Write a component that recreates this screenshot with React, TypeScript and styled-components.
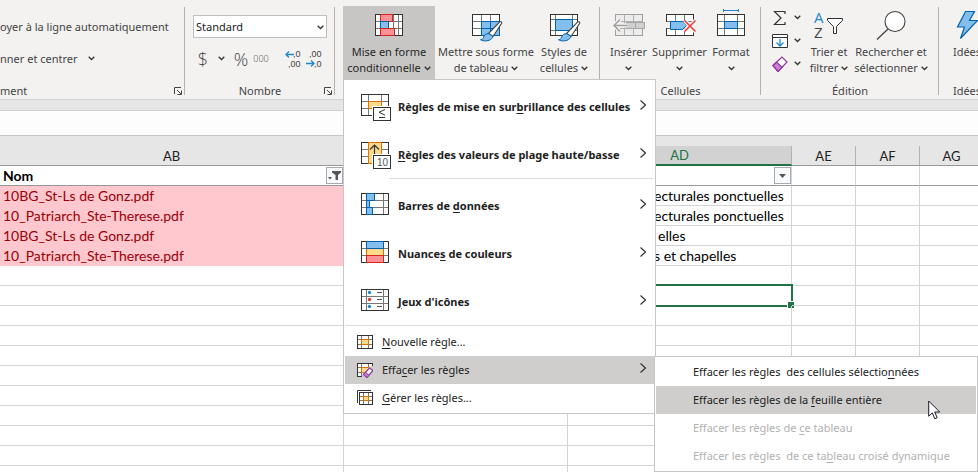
import React from 'react';
import styled, { createGlobalStyle, css } from 'styled-components';

const INK = '#444444';
const GREEN = '#217346';
const UI = '"Noto Sans", "Open Sans", sans-serif';
const SHEET = 'Lato, "Open Sans", sans-serif';

const GlobalStyle = createGlobalStyle`
  * { box-sizing: border-box; }
  html, body, #root { height: 100%; }
  body { margin: 0; overflow: hidden; background: #fff; font-family: ${UI}; font-size: 11px; color: ${INK}; }
  button, select { font: inherit; color: inherit; }
  button { border: 0; background: none; padding: 0; margin: 0; }
`;

const Window = styled.div`
  display: flex;
  flex-direction: column;
  height: 100%;
  overflow: hidden;
`;

const Ribbon = styled.header`
  display: flex;
  flex: none;
  height: 100px;
  padding-top: 6px;
  background: #f3f2f1;
  border-bottom: 1px solid #d2d0ce;
`;

const Group = styled.section<{ $w: number; $pad?: number }>`
  position: relative;
  display: flex;
  flex: 0 0 ${p => p.$w}px;
  min-width: 0;
  flex-direction: column;
  padding: 0 ${p => p.$pad ?? 0}px;
  &::after {
    content: '';
    position: absolute;
    top: 1px;
    right: 0;
    bottom: 4px;
    width: 1px;
    background: #b3b0ad;
  }
`;

const GroupBody = styled.div<{ $column?: boolean; $top?: number }>`
  display: flex;
  flex: none;
  height: 74px;
  padding-top: ${p => p.$top ?? 0}px;
  flex-direction: ${p => (p.$column ? 'column' : 'row')};
`;

const GroupFooter = styled.footer<{ $left?: boolean }>`
  display: flex;
  align-items: center;
  justify-content: ${p => (p.$left ? 'flex-start' : 'center')};
  height: 19px;
  padding-top: 2px;
  line-height: 16px;
  white-space: nowrap;
`;

const Launcher = styled.button`
  position: absolute;
  right: 3px;
  bottom: 4px;
  display: flex;
`;

const TextButton = styled.button`
  display: flex;
  align-items: center;
  gap: 10px;
  height: 32px;
  white-space: nowrap;
`;

const BigButton = styled.button<{ $w: number; $active?: boolean }>`
  display: flex;
  flex: 0 0 ${p => p.$w}px;
  flex-direction: column;
  align-items: center;
  height: 74px;
  padding-top: 4px;
  line-height: 16px;
  white-space: nowrap;
  background: ${p => (p.$active ? '#c8c6c4' : 'transparent')};
  color: ${p => (p.$active ? '#262626' : INK)};
  svg.icon { flex: none; margin-bottom: 2px; overflow: visible; }
`;

const LabelLine = styled.span`
  display: flex;
  align-items: center;
  justify-content: center;
  gap: 3px;
  min-height: 16px;
`;

const MenuAnchor = styled.div`
  position: relative;
  display: flex;
`;

const MiniColumn = styled.div`
  display: flex;
  flex: 0 0 37px;
  flex-direction: column;
  padding-left: 3px;
`;

const MiniButton = styled.button`
  display: flex;
  align-items: center;
  gap: 6px;
  height: 23px;
`;

const SelectBox = styled.label`
  position: relative;
  display: flex;
  margin-top: 9px;
  svg { position: absolute; right: 3px; top: 10px; pointer-events: none; }
`;

const Select = styled.select`
  appearance: none;
  width: 100%;
  height: 23px;
  padding: 0 2px;
  border: 1px solid #c1bfbd;
  border-radius: 0;
  background: #fff;
  color: #222;
`;

const NumberRow = styled.div`
  display: flex;
  align-items: center;
  height: 41px;
  padding-left: 4px;
`;

const NumButton = styled.button<{ $w: number; $size?: number }>`
  display: flex;
  align-items: center;
  justify-content: center;
  flex: 0 0 ${p => p.$w}px;
  height: 24px;
  font-family: "Open Sans", sans-serif;
  font-weight: 300;
  font-size: ${p => p.$size ?? 18}px;
`;

const Divider = styled.span`
  width: 1px;
  height: 21px;
  margin: 0 6px;
  background: #d2d0ce;
`;

const Strip = styled.div`
  flex: none;
  height: 11px;
  background: #e6e6e6;
  border-bottom: 1px solid #d0d0d0;
`;

const FormulaBar = styled.div`
  flex: none;
  height: 25px;
  background: #fdfdfd;
  border-bottom: 1px solid #c6c6c6;
`;

const HeaderStrip = styled.div`
  flex: none;
  height: 10px;
  background: #e6e6e6;
`;

const SheetArea = styled.main`
  flex: 1;
  min-height: 0;
  overflow: hidden;
`;

const Sheet = styled.table`
  width: 984px;
  table-layout: fixed;
  border-collapse: separate;
  border-spacing: 0;
  font-family: ${SHEET};
  font-size: 14px;
  color: #000;
`;

const Col = styled.col<{ $w: number }>`
  width: ${p => p.$w}px;
`;

const ColHead = styled.th<{ $selected?: boolean }>`
  height: 20px;
  padding: 0;
  background: #e6e6e6;
  border-right: 1px solid #b1b1b1;
  border-bottom: 1px solid #999;
  font-size: 13px;
  font-weight: 400;
  line-height: 18px;
  color: #222;
  ${p => p.$selected && css`
    background: #d2d2d2;
    color: ${GREEN};
    border-bottom: 2px solid ${GREEN};
    line-height: 17px;
  `}
`;

const Cell = styled.td<{ $head?: boolean; $bad?: boolean; $indent?: number }>`
  position: relative;
  height: 20px;
  padding: 0 0 0 ${p => p.$indent ?? 3}px;
  border-right: 1px solid #d4d4d4;
  border-bottom: 1px solid ${p => (p.$head ? '#999' : '#d4d4d4')};
  font-weight: ${p => (p.$head ? 700 : 400)};
  line-height: 19px;
  white-space: nowrap;
  ${p => p.$bad && css`
    background: #ffc7ce;
    color: #9c0006;
    border-bottom-color: #ffc7ce;
  `}
`;

const FilterButton = styled.button`
  position: absolute;
  top: 1px;
  right: 0;
  display: flex;
  align-items: center;
  justify-content: center;
  width: 17px;
  height: 17px;
  border: 1px solid #a6abb3;
  background: #f9fafc;
`;

const Selection = styled.span`
  position: absolute;
  inset: -2px;
  border: 2px solid ${GREEN};
  &::after {
    content: '';
    position: absolute;
    right: -3px;
    bottom: -3px;
    width: 6px;
    height: 6px;
    background: ${GREEN};
    border: solid #fff;
    border-width: 1px 0 0 1px;
  }
`;

const Menu = styled.div`
  position: absolute;
  top: 73px;
  left: 0;
  z-index: 5;
  width: 313px;
  padding: 2px 1px 1px;
  border: 1px solid #c6c6c6;
  background: #fff;
  color: #222;
`;

const BigItem = styled.button`
  display: flex;
  align-items: center;
  width: 100%;
  height: 48px;
  padding: 2px 7px 0 15px;
  font-weight: 700;
  white-space: nowrap;
  svg.icon { flex: none; margin-right: 6px; }
`;

const ItemText = styled.span`
  flex: 1;
  padding-bottom: 2px;
  text-align: left;
  white-space: pre;
  u { text-underline-offset: 2px; }
`;

const ArrowIcon = styled.svg`
  flex: none;
  margin-bottom: 4px;
`;

const Rule = styled.hr<{ $inset?: number }>`
  height: 1px;
  margin: 0 0 2px ${p => p.$inset ?? 0}px;
  border: 0;
  background: #dcdcdc;
`;

const SmallItem = styled.button<{ $active?: boolean }>`
  display: flex;
  align-items: center;
  width: 100%;
  height: 28px;
  padding: 0 7px 0 12px;
  background: ${p => (p.$active ? '#d0cecc' : 'transparent')};
  svg.icon { flex: none; margin-right: 9px; }
`;

const SubAnchor = styled.div`
  position: relative;
`;

const SubMenu = styled(Menu)`
  top: 0;
  left: 309px;
  width: 324px;
  padding-top: 1px;
`;

const SubItem = styled.button<{ $active?: boolean }>`
  display: flex;
  align-items: center;
  width: 100%;
  height: 28px;
  padding-left: 37px;
  background: ${p => (p.$active ? '#d0cecc' : 'transparent')};
  &:disabled { color: #b1b1b1; }
`;

const Pointer = styled.svg`
  position: absolute;
  left: 273px;
  top: 43px;
`;

const Chevron = () => (
  <svg width="7" height="5" viewBox="0 0 7 5" fill="none" stroke="#333" strokeWidth="1.3"><path d="M0.7 0.8 3.5 3.5 6.3 0.8" /></svg>
);

const Arrow = () => (
  <ArrowIcon width="8" height="12" viewBox="0 0 8 12" fill="none" stroke="#333" strokeWidth="1.2"><path d="M1.5 1.5 6.5 6 1.5 10.5" /></ArrowIcon>
);

const LauncherIcon = () => (
  <svg width="8" height="8" viewBox="0 0 8 8" fill="none" stroke="#444"><path d="M.5 7V.5H7M3 3l4 4M7.5 3.5v4h-4" /></svg>
);

type GridProps = { x?: number; y?: number; w?: number; h?: number; v: number[]; r: number[]; stroke?: string; inner?: string; fill?: string };
const GridShape = ({ x = 2, y = 4, w = 28, h = 22, v, r, stroke = '#333', inner = '#777', fill = '#fff' }: GridProps) => (
  <g transform={`translate(${x} ${y})`} fill="none">
    <rect x=".5" y=".5" width={w - 1} height={h - 1} fill={fill} />
    {v.map(n => <path key={`v${n}`} d={`M${n + 0.5} 1V${h - 1}`} stroke={inner} />)}
    {r.map(n => <path key={`r${n}`} d={`M1 ${n + 0.5}H${w - 1}`} stroke={inner} />)}
    <rect x=".5" y=".5" width={w - 1} height={h - 1} stroke={stroke} />
  </g>
);

const Box = ({ x, y, w, h, c }: { x: number; y: number; w: number; h: number; c: 'red' | 'blue' | 'gold' }) => {
  const [fill, stroke] = { red: ['#ff9196', '#d6251f'], blue: ['#83beec', '#0063b1'], gold: ['#fbdb8b', '#e07000'] }[c];
  return <rect x={x + 0.5} y={y + 0.5} width={w - 1} height={h - 1} fill={fill} stroke={stroke} />;
};

const Icon = ({ children, w = 32, h = 32 }: { children: React.ReactNode; w?: number; h?: number }) => (
  <svg className="icon" width={w} height={h} viewBox={`0 0 ${w} ${h}`} fill="none">{children}</svg>
);

const Brush = () => (
  <g>
    <path d="M18.5 23.5 29.5 12.2c1-.9 2.6-.4 2.2 1L23 26.5z" fill="#fff" stroke="#444" strokeWidth="1.1" />
    <path d="M18.7 23.7c-3-.2-4.7 1.5-5.2 3.8-.4 1.5-1.5 2-3 2.2 2 1.3 5.5 1.7 8.5.6 2.4-1 3.7-2.3 3.8-4.2z" fill="#83beec" stroke="#0063b1" />
  </g>
);

const ConditionalIcon = () => (
  <Icon><GridShape v={[5, 13, 18, 23]} r={[7, 14]} /><Box x={7} y={4} w={13} h={8} c="red" /><Box x={7} y={11} w={9} h={8} c="blue" /><Box x={7} y={18} w={15} h={8} c="red" /></Icon>
);
const TableIcon = () => (
  <Icon><GridShape v={[9, 18]} r={[7, 14]} /><rect x="11.5" y="11.5" width="18" height="14" fill="#83beec" stroke="#0063b1" /><path d="M11.5 18.5h18M20.5 11.5v14" stroke="#0063b1" /><Brush /></Icon>
);
const StylesIcon = () => (
  <Icon><GridShape v={[5, 22]} r={[5, 16]} /><Box x={7} y={9} w={18} h={12} c="blue" /><Brush /></Icon>
);
const InsertIcon = () => (
  <Icon>
    <GridShape v={[9, 18]} r={[7, 14]} stroke="#a0a0a0" inner="#b0b0b0" fill="#ececec" />
    <rect x="13.5" y="12.5" width="18" height="6" fill="#d0d0d0" stroke="#a6a6a6" />
    <path d="M22.5 12.5v6" stroke="#a6a6a6" />
    <path d="M1 15.5h13M7 9.5 1 15.5l6 6" stroke="#f3f2f1" strokeWidth="4" />
    <path d="M1 15.5h13M7 9.5 1 15.5l6 6" stroke="#a0a0a0" strokeWidth="1.5" />
  </Icon>
);
const DeleteIcon = () => (
  <Icon>
    <GridShape v={[9, 18]} r={[7, 14]} />
    <path d="M1 12h5v6H1zM20 12h12v6H20z" fill="#f3f2f1" />
    <path d="M6.5 11.5h12l4 4-4 4h-12z" fill="#83beec" stroke="#0063b1" />
    <path d="M20.5 10.5l11 11M31.5 10.5l-11 11" stroke="#f3f2f1" strokeWidth="4" />
    <path d="M20.5 10.5l11 11M31.5 10.5l-11 11" stroke="#ee3a33" strokeWidth="1.5" />
  </Icon>
);
const FormatIcon = () => (
  <Icon><GridShape v={[7, 20]} r={[7, 14]} /><Box x={9} y={11} w={14} h={8} c="blue" /><path d="M8.5-1v3M23.5-1v3M9 .5h14" stroke="#1e87cf" /></Icon>
);
const SortIcon = () => (
  <Icon>
    <text x="1" y="13" fontFamily="Open Sans" fontSize="15" fill="#1e87cf">A</text>
    <text x="1" y="28" fontFamily="Open Sans" fontSize="15" fill="#444">Z</text>
    <path d="M14.5 8.5h15v2l-6 6v7h-3v-7l-6-6z" fill="#fff" stroke="#333" />
  </Icon>
);
const SearchIcon = () => (
  <Icon><circle cx="20" cy="11.5" r="10" fill="#fff" stroke="#444" strokeWidth="1.1" /><path d="M13 19 2 29.5" stroke="#444" strokeWidth="1.3" /></Icon>
);
const IdeasIcon = () => (
  <Icon><path d="M14.5 1.5h9l-5 9h8L9.5 28.5l4-11.5H6.5z" fill="#83beec" stroke="#0063b1" strokeWidth="1.2" /></Icon>
);

const HighlightRulesIcon = () => (
  <Icon w={32} h={28}>
    <GridShape x={1} y={1} v={[7, 20]} r={[7, 14]} /><Box x={8} y={8} w={14} h={8} c="gold" />
    <rect x="12" y="13" width="20" height="15" fill="#fff" /><rect x="13.5" y="14.5" width="17" height="13" fill="#fff" stroke="#333" />
    <path d="M25 16.5l-6 2.800 6 2.800M19 24.5h6" stroke="#333" />
  </Icon>
);
const TopRulesIcon = () => (
  <Icon w={32} h={28}>
    <GridShape x={1} y={1} v={[7, 20]} r={[7, 14]} /><Box x={8} y={1} w={14} h={22} c="gold" />
    <path d="M14.5 13V4M10 8.5 14.5 4 19 8.5" stroke="#333" strokeWidth="1.2" />
    <rect x="12" y="13" width="20" height="15" fill="#fff" /><rect x="13.5" y="14.5" width="17" height="13" fill="#fff" stroke="#333" />
    <text x="17" y="25" fontFamily="Liberation Sans" fontSize="10" fontWeight="400" fill="#555">10</text>
  </Icon>
);
const DataBarsIcon = () => (
  <Icon w={32} h={28}>
    <GridShape x={1} y={1} v={[5, 22]} r={[7, 14]} /><Box x={6} y={1} w={9} h={8} c="blue" /><Box x={6} y={8} w={4} h={8} c="blue" /><Box x={6} y={15} w={7} h={8} c="blue" />
  </Icon>
);
const ColorScalesIcon = () => (
  <Icon w={32} h={28}>
    <GridShape x={1} y={1} v={[]} r={[7, 14]} /><Box x={6} y={8} w={18} h={8} c="gold" /><Box x={6} y={1} w={18} h={8} c="blue" /><Box x={6} y={15} w={18} h={8} c="red" />
  </Icon>
);
const IconSetsIcon = () => (
  <Icon w={32} h={28}>
    <GridShape x={1} y={1} v={[5, 22]} r={[7, 14]} />
    {['#1e87cf', '#e8322b', '#1e87cf'].map((c, i) => (
      <g key={i}><circle cx="9.5" cy={4.5 + i * 7} r="1.7" fill={c} /><path d={`M17 ${4.5 + i * 7}h5`} stroke="#555" /></g>
    ))}
  </Icon>
);
const NewRuleIcon = () => (
  <Icon w={16} h={16}><GridShape x={0} y={1} w={16} h={14} v={[4, 11]} r={[4, 9]} /><Box x={4} y={5} w={8} h={6} c="gold" /></Icon>
);
const ClearRuleIcon = () => (
  <Icon w={16} h={16}>
    <GridShape x={0} y={1} w={16} h={14} v={[4, 11]} r={[4, 9]} /><Box x={4} y={5} w={8} h={6} c="gold" />
    <path d="M5 13 13 4h3v12H5z" fill="#d0cecc" />
    <path d="M6.5 12.5l6-6.5 3.5 2.5-6 7z" fill="#fff" stroke="#9334a0" strokeWidth="1.2" /><path d="M6.5 12.5l2-2.2 3.5 3-2 2.2z" fill="#c87fd2" stroke="#9334a0" />
  </Icon>
);
const ManageRulesIcon = () => (
  <Icon w={16} h={16}><path d="M.5 13V.5H14" stroke="#333" /><GridShape x={2} y={2} w={14} h={13} v={[4, 9]} r={[4, 8]} /><Box x={6} y={6} w={6} h={5} c="gold" /></Icon>
);

const SumIcon = () => (
  <svg width="16" height="16" viewBox="0 0 16 16" fill="none" stroke="#333" strokeWidth="1.2"><path d="M13 4V1.5H2.5L9 8l-6.5 6.5H13V12" /></svg>
);
const FillIcon = () => (
  <svg width="16" height="16" viewBox="0 0 16 16" fill="none"><path d="M.5 1.5h15v13H.5z" fill="#fff" stroke="#333" /><path d="M1 4.5h14" stroke="#333" /><path d="M8 6v7M4.5 9.5 8 13l3.5-3.5" stroke="#1e87cf" strokeWidth="1.3" /></svg>
);
const EraserIcon = () => (
  <svg width="16" height="16" viewBox="0 0 16 16"><path d="M1 9.5 10 1l5 5-9 9.5z" fill="#fff" stroke="#9334a0" strokeWidth="1.2" /><path d="M1 9.5 4.5 6l5.5 5.2L6 15.5z" fill="#c87fd2" stroke="#9334a0" strokeWidth="1.2" /></svg>
);
const DecimalIcon = ({ less }: { less?: boolean }) => (
  <svg width="18" height="18" viewBox="0 0 18 18" fill="#444" fontFamily="Liberation Sans" fontSize="9" fontWeight="400">
    {less ? <><text x="3" y="7">,00</text><text x="8" y="17">,0</text><path d="M0 13.5h8M5 10.5l3 3-3 3" fill="none" stroke="#1e87cf" strokeWidth="1.3" /></>
      : <><text x="8" y="7">,0</text><text x="3" y="17">,00</text><path d="M9 4.5H1M4 1.5l-3 3 3 3" fill="none" stroke="#1e87cf" strokeWidth="1.3" /></>}
  </svg>
);

const bigRules = [
  { icon: <HighlightRulesIcon />, text: <>Règles de mise en sur<u>b</u>rillance des cellules</> },
  { icon: <TopRulesIcon />, text: <><u>R</u>ègles des valeurs de plage haute/basse</>, end: true },
  { icon: <DataBarsIcon />, text: <>Barres de <u>d</u>onnées</> },
  { icon: <ColorScalesIcon />, text: <>Nuance<u>s</u> de couleurs</> },
  { icon: <IconSetsIcon />, text: <><u>J</u>eux d'icônes</> },
];

const RulesMenu = () => (
  <Menu role="menu">
    {bigRules.map((r, i) => (
      <React.Fragment key={i}>
        <BigItem role="menuitem">{r.icon}<ItemText>{r.text}</ItemText><Arrow /></BigItem>
        {r.end && <Rule $inset={44} />}
      </React.Fragment>
    ))}
    <Rule />
    <SmallItem role="menuitem"><NewRuleIcon /><ItemText><u>N</u>ouvelle règle...</ItemText></SmallItem>
    <SubAnchor>
      <SmallItem role="menuitem" $active><ClearRuleIcon /><ItemText>Effa<u>c</u>er les règles</ItemText><Arrow /></SmallItem>
      <SubMenu role="menu">
        <SubItem role="menuitem"><ItemText>Effacer les règles  des cellules sélectio<u>n</u>nées</ItemText></SubItem>
        <SubItem role="menuitem" $active><ItemText>Effacer les règles de la <u>f</u>euille entière</ItemText></SubItem>
        <SubItem role="menuitem" disabled><ItemText>Effacer les règles de <u>c</u>e tableau</ItemText></SubItem>
        <SubItem role="menuitem" disabled><ItemText>Effacer les règles  de ce ta<u>b</u>leau croisé dynamique</ItemText></SubItem>
        <Pointer width="13" height="20" viewBox="0 0 13 20"><path d="M.7 1v15.2l3.6-3.3 2.5 5.9 2.4-1-2.5-5.8h5z" fill="#fff" stroke="#1a1a2a" /></Pointer>
      </SubMenu>
    </SubAnchor>
    <SmallItem role="menuitem"><ManageRulesIcon /><ItemText><u>G</u>érer les règles...</ItemText></SmallItem>
  </Menu>
);

type BigProps = { w: number; icon: React.ReactNode; top: string; bottom?: string; active?: boolean; plain?: boolean };
const Big = ({ w, icon, top, bottom, active, plain }: BigProps) => (
  <BigButton $w={w} $active={active}>
    {icon}
    <LabelLine>{top}</LabelLine>
    <LabelLine>{bottom}{!plain && <Chevron />}</LabelLine>
  </BigButton>
);

const rows: { ab?: string; ad?: string; indent?: number }[] = [
  { ab: '10BG_St-Ls de Gonz.pdf', ad: 'ecturales ponctuelles', indent: 86 },
  { ab: '10_Patriarch_Ste-Therese.pdf', ad: 'ecturales ponctuelles', indent: 86 },
  { ab: '10BG_St-Ls de Gonz.pdf', ad: 'elles', indent: 90 },
  { ab: '10_Patriarch_Ste-Therese.pdf', ad: 's et chapelles', indent: 86 },
  {}, {}, {}, {}, {}, {}, {}, {}, {}, {}, {},
];
const SELECTED_ROW = 5;

export default function App() {
  return (
    <Window>
      <GlobalStyle />
      <Ribbon>
        <Group $w={185}>
          <GroupBody $column $top={4}>
            <TextButton>oyer à la ligne automatiquement</TextButton>
            <TextButton>nner et centrer <Chevron /></TextButton>
          </GroupBody>
          <GroupFooter $left>ment</GroupFooter>
          <Launcher aria-label="Alignement"><LauncherIcon /></Launcher>
        </Group>
        <Group $w={150} $pad={8}>
          <GroupBody $column>
            <SelectBox>
              <Select aria-label="Format de nombre"><option>Standard</option></Select>
              <Chevron />
            </SelectBox>
            <NumberRow>
              <NumButton $w={12}>$</NumButton>
              <NumButton $w={24} aria-label="Formats monétaires"><Chevron /></NumButton>
              <NumButton $w={16}>%</NumButton>
              <NumButton $w={24} $size={9}>000</NumButton>
              <Divider />
              <NumButton $w={18} aria-label="Ajouter une décimale"><DecimalIcon /></NumButton>
              <NumButton $w={24} aria-label="Réduire les décimales"><DecimalIcon less /></NumButton>
            </NumberRow>
          </GroupBody>
          <GroupFooter>Nombre</GroupFooter>
          <Launcher aria-label="Nombre"><LauncherIcon /></Launcher>
        </Group>
        <Group $w={265} $pad={8}>
          <GroupBody>
            <MenuAnchor>
              <Big w={92} active icon={<ConditionalIcon />} top="Mise en forme" bottom="conditionnelle" />
              <RulesMenu />
            </MenuAnchor>
            <Big w={102} icon={<TableIcon />} top="Mettre sous forme" bottom="de tableau" />
            <Big w={54} icon={<StylesIcon />} top="Styles de" bottom="cellules" />
          </GroupBody>
        </Group>
        <Group $w={161} $pad={6}>
          <GroupBody>
            <Big w={45} icon={<InsertIcon />} top="Insérer" />
            <Big w={57} icon={<DeleteIcon />} top="Supprimer" />
            <Big w={46} icon={<FormatIcon />} top="Format" />
          </GroupBody>
          <GroupFooter>Cellules</GroupFooter>
        </Group>
        <Group $w={178} $pad={8}>
          <GroupBody>
            <MiniColumn>
              <MiniButton aria-label="Somme"><SumIcon /><Chevron /></MiniButton>
              <MiniButton aria-label="Remplissage"><FillIcon /><Chevron /></MiniButton>
              <MiniButton aria-label="Effacer"><EraserIcon /><Chevron /></MiniButton>
            </MiniColumn>
            <Big w={46} icon={<SortIcon />} top="Trier et" bottom="filtrer" />
            <Big w={78} icon={<SearchIcon />} top="Rechercher et" bottom="sélectionner" />
          </GroupBody>
          <GroupFooter>Édition</GroupFooter>
        </Group>
        <Group $w={56}>
          <GroupBody><Big w={56} plain icon={<IdeasIcon />} top="Idées" /></GroupBody>
          <GroupFooter>Idées</GroupFooter>
        </Group>
      </Ribbon>
      <Strip />
      <FormulaBar />
      <HeaderStrip />
      <SheetArea>
        <Sheet>
          <colgroup>
            {[344, 224, 224, 64, 64, 64].map((w, i) => <Col key={i} $w={w} />)}
          </colgroup>
          <thead>
            <tr>{['AB', 'AC', 'AD', 'AE', 'AF', 'AG'].map(c => <ColHead key={c} $selected={c === 'AD'}>{c}</ColHead>)}</tr>
          </thead>
          <tbody>
            <tr>
              <Cell $head>Nom
                <FilterButton aria-label="Filtre actif">
                  <svg width="13" height="11" viewBox="0 0 13 11" fill="#555"><path d="M4 1h9v1.5L10 5v5H7.5V5L4 2.5zM0 7h4L2 9.5z" /></svg>
                </FilterButton>
              </Cell>
              <Cell $head />
              <Cell $head>
                <FilterButton aria-label="Filtrer"><svg width="7" height="4" viewBox="0 0 7 4" fill="#555"><path d="M0 0h7L3.5 4z" /></svg></FilterButton>
              </Cell>
              <Cell $head /><Cell $head /><Cell $head />
            </tr>
            {rows.map((r, i) => (
              <tr key={i}>
                <Cell $bad={!!r.ab}>{r.ab}</Cell>
                <Cell />
                <Cell $indent={r.indent}>{r.ad}{i === SELECTED_ROW && <Selection />}</Cell>
                <Cell /><Cell /><Cell />
              </tr>
            ))}
          </tbody>
        </Sheet>
      </SheetArea>
    </Window>
  );
}
